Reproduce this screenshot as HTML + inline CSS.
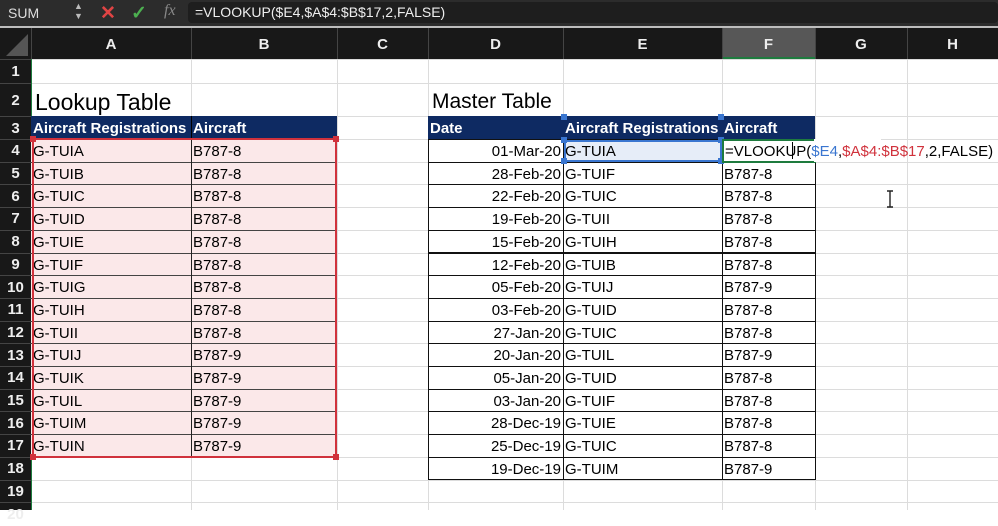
<!DOCTYPE html><html><head><meta charset="utf-8"><style>
body{margin:0;width:998px;height:510px;overflow:hidden;background:#fff;font-family:"Liberation Sans",sans-serif;position:relative}
div{box-sizing:border-box}
.a{position:absolute}
.t{position:absolute;font-size:15px;line-height:22px;padding-top:2px;white-space:nowrap;color:#000;padding-left:2px;padding-right:2px}
</style></head><body>
<div class="a" style="left:0;top:0;width:998px;height:27px;background:#2c2c2c"></div>
<div class="a" style="left:0;top:26px;width:998px;height:2px;background:#bdbdbd"></div>
<div class="a" style="left:8px;top:5px;color:#ddd;font-size:14px">SUM</div>
<div class="a" style="left:74px;top:1px;color:#bbb;font-size:9px;line-height:10px">▲<br>▼</div>
<div class="a" style="left:100px;top:2px;color:#e04444;font-size:19px;font-weight:bold">✕</div>
<div class="a" style="left:131px;top:2px;color:#4caf50;font-size:19px;font-weight:bold">✓</div>
<div class="a" style="left:164px;top:2px;color:#888;font-size:16px;font-style:italic;font-family:'Liberation Serif',serif">fx</div>
<div class="a" style="left:188px;top:2px;width:810px;height:21px;background:#1e1e1e;border-radius:4px"></div>
<div class="a" style="left:195px;top:4px;color:#eee;font-size:14px">=VLOOKUP($E4,$A$4:$B$17,2,FALSE)</div>
<div id="g"></div>
<script>
var cw=[31,160,146,91,135,159,93,92,91],cx=[0];for(var i=0;i<cw.length;i++)cx.push(cx[i]+cw[i]);
var rt={1:59,2:83,3:116};for(var r=4;r<=21;r++)rt[r]=139+(r-4)*22.7;
var h='';
function R(x,y,w,hh,s){h+='<div class="a" style="left:'+x+'px;top:'+y+'px;width:'+w+'px;height:'+hh+'px;'+s+'"></div>';}
function T(x,y,w,txt,s){h+='<div class="t" style="left:'+x+'px;top:'+y+'px;width:'+w+'px;'+(s||'')+'">'+txt+'</div>';}
R(0,28,998,31,'background:#181818');
R(cx[6],28,cw[6],31,'background:#575757;border-bottom:2px solid #1e7b3e');
var L='ABCDEFGH';for(i=1;i<=8;i++){R(cx[i],28,1,31,'background:#444');T(cx[i],32,cw[i],L[i-1],'color:#eee;text-align:center;font-size:15px;font-weight:bold');}
h+='<svg class="a" style="left:4px;top:32px" width="26" height="26"><polygon points="24,2 24,24 2,24" fill="#555"/></svg>';
R(0,59,31,451,'background:#181818');
for(r=1;r<=20;r++){var y=rt[r],hh=rt[r+1]-y;R(0,y,31,1,'background:#444');T(0,y+(hh-24)/2,31,r,'color:#eee;text-align:center;font-size:15px;font-weight:bold;padding-left:0;padding-right:0');R(31,y,967,1,'background:#dcdcdc');}
for(i=2;i<=8;i++)R(cx[i],59,1,451,'background:#dcdcdc');
R(31,59,1,451,'background:#1e7b3e');
T(cx[1]+2,rt[2]+3,200,'Lookup Table','font-size:23px;line-height:28px');
T(cx[4]+2,rt[2]+3,200,'Master Table','font-size:21px;line-height:28px');
R(cx[1],rt[3],cw[1]+cw[2],23,'background:#0e2a62');R(cx[2],rt[3],1,23,'background:#000');
T(cx[1],rt[3],cw[1],'Aircraft Registrations','color:#fff;font-weight:bold');T(cx[2],rt[3],cw[2],'Aircraft','color:#fff;font-weight:bold');
R(cx[4],rt[3],cw[4]+cw[5]+cw[6],23,'background:#0e2a62');
T(cx[4],rt[3],cw[4],'Date','color:#fff;font-weight:bold');T(cx[5],rt[3],cw[5],'Aircraft Registrations','color:#fff;font-weight:bold');T(cx[6],rt[3],cw[6],'Aircraft','color:#fff;font-weight:bold');
var lk=[['A','8'],['B','8'],['C','8'],['D','8'],['E','8'],['F','8'],['G','8'],['H','8'],['I','8'],['J','9'],['K','9'],['L','9'],['M','9'],['N','9']];
R(cx[1],rt[4],cw[1]+cw[2],rt[18]-rt[4],'background:#fbe8e9');
for(i=0;i<14;i++){y=rt[4+i];if(i)R(cx[1],y,cw[1]+cw[2],1,'background:#444');T(cx[1],y,cw[1],'G-TUI'+lk[i][0]);T(cx[2],y,cw[2],'B787-'+lk[i][1]);}
R(cx[2],rt[4],1,rt[18]-rt[4],'background:#222');
R(cx[1]+1,rt[4]-1,cw[1]+cw[2]-1,rt[18]-rt[4]+2,'border:2px solid #d0323c');
[[cx[1]-1,rt[4]-3],[cx[3]-4,rt[4]-3],[cx[1]-1,rt[18]-3],[cx[3]-4,rt[18]-3]].forEach(function(p){R(p[0],p[1],6,6,'background:#d0323c');});
var ms=[['01-Mar-20','A',''],['28-Feb-20','F','8'],['22-Feb-20','C','8'],['19-Feb-20','I','8'],['15-Feb-20','H','8'],['12-Feb-20','B','8'],['05-Feb-20','J','9'],['03-Feb-20','D','8'],['27-Jan-20','C','8'],['20-Jan-20','L','9'],['05-Jan-20','D','8'],['03-Jan-20','F','8'],['28-Dec-19','E','8'],['25-Dec-19','C','8'],['19-Dec-19','M','9']];
for(i=0;i<15;i++){y=rt[4+i];var hh=rt[5+i]-y;for(var c=4;c<=6;c++)R(cx[c],y,cw[c]+1,hh+1,'border:1px solid #111');
T(cx[4],y,cw[4],ms[i][0],'text-align:right');T(cx[5],y,cw[5],'G-TUI'+ms[i][1]);if(ms[i][2])T(cx[6],y,cw[6],'B787-'+ms[i][2]);}
R(cx[5]+1,rt[4]+1,cw[5]-1,rt[5]-rt[4]-1,'background:#e6edf8;border:2px solid #3a76d0');
T(cx[5],rt[4],cw[5],'G-TUIA');
[[cx[5]-2,rt[4]-2],[cx[6]-4,rt[4]-2],[cx[5]-2,rt[5]-4],[cx[6]-4,rt[5]-4],[cx[5]-2,rt[3]-2],[cx[6]-4,rt[3]-2]].forEach(function(p){R(p[0],p[1],6,6,'background:#3a76d0');});
R(cx[6],rt[4],cw[6]+1,rt[5]-rt[4]+1,'background:#fff;border:2px solid #1e7b3e');
R(cx[7]-1,rt[4],cw[7]-25,rt[5]-rt[4],'background:#fff');
T(cx[6]+1,rt[4],260,'=VLOOKUP(<span style="color:#3a76d0">$E4</span>,<span style="color:#d0323c">$A$4:$B$17</span>,2,FALSE)','font-size:15px');
R(792,rt[4]+3,1,17,'background:#000');
h+='<svg class="a" style="left:885px;top:190px" width="10" height="18"><path d="M2 1h6M5 1v16M2 17h6" stroke="#222" stroke-width="1.4" fill="none"/></svg>';
document.getElementById('g').innerHTML=h;
</script>
</body></html>
